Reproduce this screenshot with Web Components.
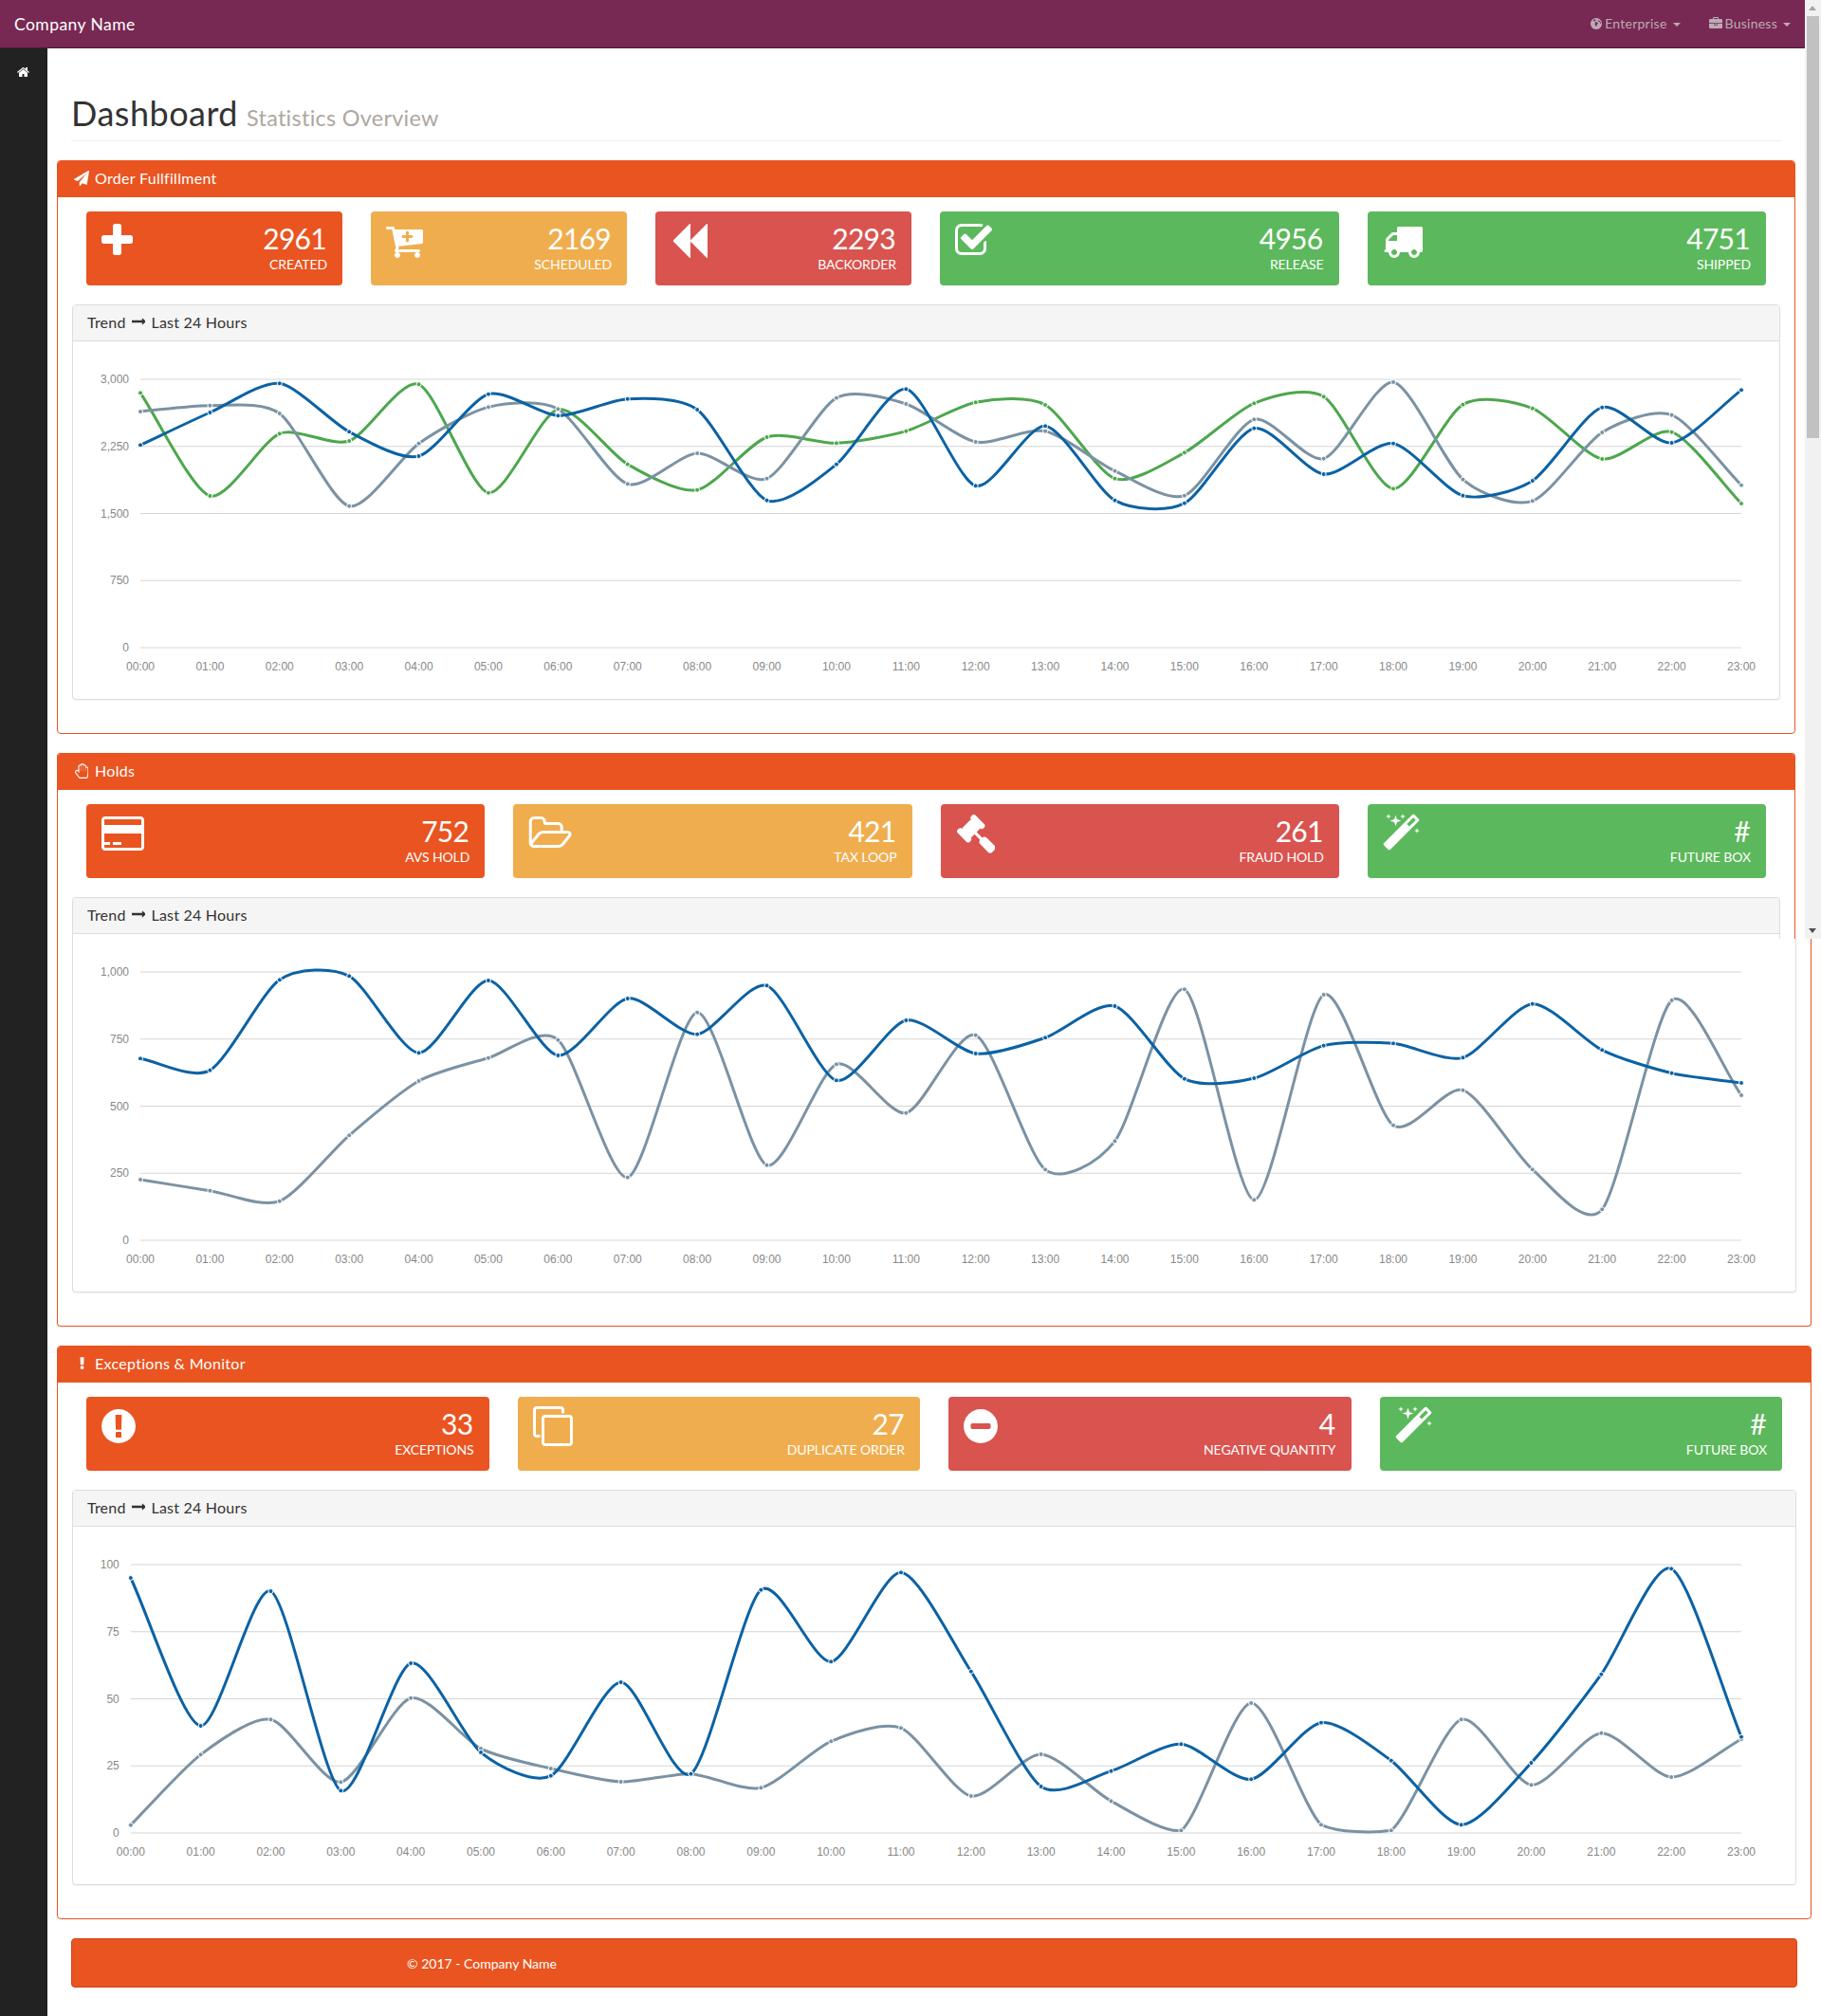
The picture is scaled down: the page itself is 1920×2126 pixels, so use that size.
<!DOCTYPE html>
<html lang="en"><head><meta charset="utf-8"><title>Dashboard</title>
<style>
html,body{margin:0;padding:0;background:#fff}
body{font-family:Lato,"Open Sans",sans-serif;color:#333;width:1920px;overflow:hidden}
</style></head><body>
<dash-app>
  <top-nav slot="nav" brand="Company Name"><nav-menu icon="globe">Enterprise</nav-menu><nav-menu icon="briefcase">Business</nav-menu></top-nav>
  <side-bar slot="side"></side-bar>
  <page-head>Dashboard<span slot="sub">Statistics Overview</span></page-head>

  <dash-panel icon="paper-plane" heading="Order Fullfillment">
    <stat-row cols="270px 270px 270px 1fr 1fr">
      <stat-box tone="primary" icon="plus" value="2961" label="CREATED"></stat-box>
      <stat-box tone="warning" icon="cart-plus" value="2169" label="SCHEDULED"></stat-box>
      <stat-box tone="danger" icon="backward" value="2293" label="BACKORDER"></stat-box>
      <stat-box tone="success" icon="check-square" value="4956" label="RELEASE"></stat-box>
      <stat-box tone="success" icon="truck" value="4751" label="SHIPPED"></stat-box>
    </stat-row>
    <trend-card><trend-chart chart="orders" origin="360" h="377"></trend-chart></trend-card>
  </dash-panel>

  <dash-panel icon="hand" heading="Holds" mode="top">
    <stat-row cols="1fr 1fr 1fr 1fr">
      <stat-box tone="primary" icon="credit-card" value="752" label="AVS HOLD"></stat-box>
      <stat-box tone="warning" icon="folder-open" value="421" label="TAX LOOP"></stat-box>
      <stat-box tone="danger" icon="gavel" value="261" label="FRAUD HOLD"></stat-box>
      <stat-box tone="success" icon="magic" value="#" label="FUTURE BOX"></stat-box>
    </stat-row>
    <trend-card mode="top"></trend-card>
  </dash-panel>
  <dash-panel mode="bottom">
    <trend-card mode="bottom"><trend-chart chart="holds" origin="990" h="372"></trend-chart></trend-card>
  </dash-panel>

  <dash-panel icon="exclamation" heading="Exceptions &amp; Monitor" wide>
    <stat-row cols="1fr 1fr 1fr 1fr">
      <stat-box tone="primary" icon="exclamation-circle" value="33" label="EXCEPTIONS"></stat-box>
      <stat-box tone="warning" icon="clone" value="27" label="DUPLICATE ORDER"></stat-box>
      <stat-box tone="danger" icon="minus-circle" value="4" label="NEGATIVE QUANTITY"></stat-box>
      <stat-box tone="success" icon="magic" value="#" label="FUTURE BOX"></stat-box>
    </stat-row>
    <trend-card><trend-chart chart="exceptions" origin="1610" h="377"></trend-chart></trend-card>
  </dash-panel>

  <page-foot>© 2017 - Company Name</page-foot>
  <fake-scrollbar slot="overlay"></fake-scrollbar>
</dash-app>

<script>
const ICONS={
 plus:[192,1408,"M1600 736v192q0 40-28 68t-68 28h-416v416q0 40-28 68t-68 28h-192q-40 0-68-28t-28-68v-416h-416q-40 0-68-28t-28-68v-192q0-40 28-68t68-28h416v-416q0-40 28-68t68-28h192q40 0 68 28t28 68v416h416q40 0 68 28t28 68z"],
 home:[64,1664,"M1472 992v480q0 26-19 45t-45 19h-384v-384h-256v384h-384q-26 0-45-19t-19-45v-480q0-1 .5-3t.5-3l575-474 575 474q1 2 1 6zm223-69l-62 74q-8 9-21 11h-3q-13 0-21-7l-692-577-692 577q-12 8-24 7-13-2-21-11l-62-74q-8-10-7-23.5t11-21.5l719-599q32-26 76-26t76 26l244 204v-195q0-14 9-23t23-9h192q14 0 23 9t9 23v408l219 182q10 8 11 21.5t-7 23.5z"],
 "paper-plane":[0,1792,"M1764 11q33 24 27 64l-256 1536q-5 29-32 45-14 8-31 8-11 0-24-5l-453-185-242 295q-18 23-49 23-13 0-22-4-19-7-30.5-23.5t-11.5-36.5v-349l864-1059-1069 925-395-162q-37-14-40-55-2-40 32-59l1664-960q15-9 32-9 20 0 36 11z"],
 exclamation:[608,576,"M1088 1248v224q0 26-19 45t-45 19h-256q-26 0-45-19t-19-45v-224q0-26 19-45t45-19h256q26 0 45 19t19 45zm30-1056l-28 768q-1 26-20.5 45t-45.5 19h-256q-26 0-45.5-19t-20.5-45l-28-768q-1-26 17.5-45t44.5-19h320q26 0 44.5 19t17.5 45z"],
 "exclamation-circle":[128,1536,"M896 128q209 0 385.5 103t279.5 279.5 103 385.5-103 385.5-279.5 279.5-385.5 103-385.5-103-279.5-279.5-103-385.5 103-385.5 279.5-279.5 385.5-103zm128 1247v-190q0-14-9-23.5t-22-9.5h-192q-13 0-23 10t-10 23v190q0 13 10 23t23 10h192q13 0 22-9.5t9-23.5zm-2-344l18-621q0-12-10-18-10-8-24-8h-220q-14 0-24 8-10 6-10 18l17 621q0 10 10 17.5t24 7.5h185q14 0 23.5-7.5t10.5-17.5z"],
 "minus-circle":[128,1536,"M1344 960v-128q0-26-19-45t-45-19h-768q-26 0-45 19t-19 45v128q0 26 19 45t45 19h768q26 0 45-19t19-45zm320-64q0 209-103 385.5t-279.5 279.5-385.5 103-385.5-103-279.5-279.5-103-385.5 103-385.5 279.5-279.5 385.5-103 385.5 103 279.5 279.5 103 385.5z"],
 "check-square":[64,1664,"M1472 930v318q0 119-84.5 203.5t-203.5 84.5h-832q-119 0-203.5-84.5t-84.5-203.5v-832q0-119 84.5-203.5t203.5-84.5h832q63 0 117 25 15 7 18 23 3 17-9 29l-49 49q-10 10-23 10-3 0-9-2-23-6-45-6h-832q-66 0-113 47t-47 113v832q0 66 47 113t113 47h832q66 0 113-47t47-113v-254q0-13 9-22l64-64q10-10 23-10 6 0 12 3 20 8 20 29zm231-489l-814 814q-24 24-57 24t-57-24l-430-430q-24-24-24-57t24-57l110-110q24-24 57-24t57 24l263 263 647-647q24-24 57-24t57 24l110 110q24 24 24 57t-24 57z"],
 truck:[0,1792,"M640 1408q0-52-38-90t-90-38-90 38-38 90 38 90 90 38 90-38 38-90zm-384-512h384v-256h-158q-13 0-22 9l-195 195q-9 9-9 22v30zm1280 512q0-52-38-90t-90-38-90 38-38 90 38 90 90 38 90-38 38-90zm256-1088v1024q0 15-4 26.5t-13.5 18.5-16.5 11.5-23.5 6-22.5 2-25.5 0-22.5-.5q0 106-75 181t-181 75-181-75-75-181h-384q0 106-75 181t-181 75-181-75-75-181h-64q-3 0-22.5.5t-25.5 0-22.5-2-23.5-6-16.5-11.5-13.5-18.5-4-26.5q0-26 19-45t45-19v-320q0-8-.5-35t0-38 2.5-34.5 6.5-37 14-30.5 22.5-30l198-198q19-19 50.5-32t58.5-13h160v-192q0-26 19-45t45-19h1024q26 0 45 19t19 45z"],
 "credit-card":[0,1920,"M1760 128q66 0 113 47t47 113v1216q0 66-47 113t-113 47h-1600q-66 0-113-47t-47-113v-1216q0-66 47-113t113-47h1600zm-1600 128q-13 0-22.5 9.5t-9.5 22.5v224h1664v-224q0-13-9.5-22.5t-22.5-9.5h-1600zm1600 1280q13 0 22.5-9.5t9.5-22.5v-608h-1664v608q0 13 9.5 22.5t22.5 9.5h1600zm-1632-128v-128h256v128h-256zm384 0v-128h384v128h-384z"],
 "folder-open":[32,1973,"M1845 931q0-35-53-35h-1088q-40 0-85.5 21.5t-71.5 52.5l-294 363q-18 24-18 40 0 35 53 35h1088q40 0 86-22t71-53l294-363q18-22 18-39zm-1141-163h768v-160q0-40-28-68t-68-28h-576q-40 0-68-28t-28-68v-64q0-40-28-68t-68-28h-320q-40 0-68 28t-28 68v853l256-315q44-53 116-87.5t140-34.5zm1269 163q0 62-46 120l-295 363q-43 53-116 87.5t-140 34.5h-1088q-92 0-158-66t-66-158v-960q0-92 66-158t158-66h320q92 0 158 66t66 158v32h544q92 0 158 66t66 158v160h192q54 0 99 24.5t67 70.5q15 32 15 68z"],
 gavel:[0,1771,"M1771 1536q0 53-37 90l-107 108q-39 37-91 37-53 0-90-37l-363-364q-38-36-38-90 0-53 43-96l-256-256-126 126q-14 14-34 14t-34-14q2 2 12.5 12t12.5 13 10 11.5 10 13.5 6 13.5 5.500 16.500 1.500 18q0 38-28 68-3 3-16.500 18t-19 20.500-18.500 16.500-22 15.500-22 9-26 4.500q-40 0-68-28l-408-408q-28-28-28-68 0-13 4.500-26t9-22 15.500-22 16.500-18.500 20.500-19 18-16.500q30-28 68-28 10 0 18 1.500t16.500 5.500 13.500 6 13.500 10 11.500 10 13 12.500 12 12.500q-14-14-14-34t14-34l348-348q14-14 34-14t34 14q-2-2-12.500-12t-12.500-13-10-11.500-10-13.500-6-13.500-5.500-16.500-1.500-18q0-38 28-68 3-3 16.500-18t19-20.500 18.500-16.500 22-15.500 22-9 26-4.500q40 0 68 28l408 408q28 28 28 68 0 13-4.500 26t-9 22-15.500 22-16.500 18.500-20.500 19-18 16.500q-30 28-68 28-10 0-18-1.500t-16.500-5.500-13.500-6-13.500-10-11.500-10-13-12.500-12-12.500q14 14 14 34t-14 34l-126 126 256 256q43-43 96-43 52 0 91 37l363 363q37 39 37 91z"],
 magic:[64,1664,"M1254 581l293-293-107-107-293 293zm447-293q0 27-18 45l-1286 1286q-18 18-45 18t-45-18l-198-198q-18-18-18-45t18-45l1286-1286q18-18 45-18t45 18l198 198q18 18 18 45zm-1351-190l98 30-98 30-30 98-30-98-98-30 98-30 30-98zm350 162l196 60-196 60-60 196-60-196-196-60 196-60 60-196zm930 478l98 30-98 30-30 98-30-98-98-30 98-30 30-98zm-640-640l98 30-98 30-30 98-30-98-98-30 98-30 30-98z"],
 clone:[0,1792,"M1664 1632v-1088q0-13-9.500-22.500t-22.500-9.500h-1088q-13 0-22.500 9.500t-9.500 22.500v1088q0 13 9.500 22.500t22.500 9.500h1088q13 0 22.500-9.500t9.500-22.500zm128-1088v1088q0 66-47 113t-113 47h-1088q-66 0-113-47t-47-113v-1088q0-66 47-113t113-47h1088q66 0 113 47t47 113zm-384-384v160h-128v-160q0-13-9.500-22.500t-22.500-9.500h-1088q-13 0-22.500 9.500t-9.500 22.500v1088q0 13 9.500 22.500t22.500 9.500h160v128h-160q-66 0-113-47t-47-113v-1088q0-66 47-113t113-47h1088q66 0 113 47t47 113z"],
 hand:[0,1536,"M880 128q-46 0-79 33t-33 79v656h-32v-528q0-46-33-79t-79-33-79 33-33 79v528 256l-154-205q-38-51-102-51-53 0-90.500 37.500t-37.500 90.500q0 43 26 77l384 512q38 51 102 51h688q34 0 61-22t34-56l76-405q5-32 5-59v-498q0-46-33-79t-79-33-79 33-33 79v272h-32v-528q0-46-33-79t-79-33-79 33-33 79v528h-32v-656q0-46-33-79t-79-33zm0-128q68 0 125.500 35.500t88.500 96.500q19-4 42-4 99 0 169.500 70.500t70.500 169.500v17q105-6 180.500 64t75.500 175v498q0 40-8 83l-76 404q-14 79-76.500 131t-143.500 52h-688q-60 0-114.500-27.500t-90.500-74.500l-384-512q-51-68-51-154 0-106 75-181t181-75q78 0 128 34v-434q0-99 70.500-169.500t169.500-70.500q23 0 42 4 31-61 88.500-96.500t125.500-35.500z"],
 "cart-plus":[0,1664,"M1216 704q0-26-19-45t-45-19h-128v-128q0-26-19-45t-45-19-45 19-19 45v128h-128q-26 0-45 19t-19 45 19 45 45 19h128v128q0 26 19 45t45 19 45-19 19-45v-128h128q26 0 45-19t19-45zm-576 832q0 53-37.500 90.500t-90.500 37.500-90.500-37.500-37.500-90.500 37.500-90.500 90.500-37.500 90.500 37.500 37.500 90.500zm896 0q0 53-37.500 90.500t-90.500 37.500-90.500-37.500-37.500-90.500 37.500-90.500 90.500-37.500 90.500 37.500 37.500 90.500zm128-1088v512q0 24-16 42.500t-41 21.500l-1044 122q1 7 4.500 21.500t6 26.500 2.500 22q0 16-24 64h920q26 0 45 19t19 45-19 45-45 19h-1024q-26 0-45-19t-19-45q0-14 11-39.500t29.500-59.500 20.500-38l-177-823h-204q-26 0-45-19t-19-45 19-45 45-19h256q16 0 28.500 6.500t20 15.500 13 24.500 7.500 26.500 5.500 29.500 4.500 25.500h1201q26 0 45 19t19 45z"],
 backward:[64,1664,"M1683 141q19-19 32-13t13 32v1472q0 26-13 32t-32-13l-710-710q-9-9-13-19v710q0 26-13 32t-32-13l-710-710q-19-19-19-45t19-45l710-710q19-19 32-13t13 32v710q4-10 13-19z"],
 arrow:[64,1664,"M1728 893q0 14-10 24l-384 354q-16 14-35 6-19-9-19-29v-224h-1248q-14 0-23-9t-9-23v-192q0-14 9-23t23-9h1248v-224q0-21 19-29t35 5l384 350q10 10 10 23z"],
 briefcase:[0,1792,"M640 256h512v-128h-512v128zm1152 640v480q0 66-47 113t-113 47h-1472q-66 0-113-47t-47-113v-480h672v160q0 26 19 45t45 19h320q26 0 45-19t19-45v-160h672zm-768 0v128h-256v-128h256zm768-480v384h-1792v-384q0-66 47-113t113-47h352v-160q0-40 28-68t68-28h576q40 0 68 28t28 68v160h352q66 0 113 47t47 113z"],
 globe:[128,1536,"M896 128q209 0 385.500 103t279.500 279.500 103 385.500-103 385.500-279.500 279.500-385.500 103-385.500-103-279.500-279.500-103-385.500 103-385.500 279.500-279.500 385.500-103zm-420 330l90 130 170 60 60 130-90 110 50 170 130 230 70-40 20-190 150-150-20-150-170-60-150-100-110 30-20-130 120-30 90-90-150-90zm700-50l-120 90 90 60 150 70 130 130-10 70 90 100 40-60-60-200-160-170z"]
};
function iconSvg(name,size,extra){
  const [x0,w,d]=ICONS[name];
  return `<svg xmlns="http://www.w3.org/2000/svg" width="${w/1792*size}" height="${size}" viewBox="${x0} 0 ${w} 1792" fill="currentColor" style="display:block;flex:none;${extra||''}"><path fill-rule="evenodd" d="${d}"/></svg>`;
}
function def(name,html,init){
  customElements.define(name,class extends HTMLElement{
    connectedCallback(){
      if(this.shadowRoot)return;
      const r=this.attachShadow({mode:'open'});
      r.innerHTML=typeof html==='function'?html(this):html;
      if(init)init(this,r);
    }
  });
}
def('dash-app',`<style>
:host{display:block;position:relative;width:1920px;height:2126px;overflow:hidden;background:#fff}
.row{display:flex;height:2075px}
main{flex:1;min-width:0;padding-left:10px}
</style><slot name="nav"></slot><div class="row"><slot name="side"></slot><main><slot></slot></main></div><slot name="overlay"></slot>`);

def('top-nav',h=>`<style>
:host{display:flex;align-items:center;justify-content:space-between;box-sizing:border-box;height:51px;margin-right:17px;background:#772953;border-bottom:1px solid #4d1a36;padding:0 15px}
.brand{color:#fff;font-size:17.5px;letter-spacing:.45px;line-height:20px;margin-top:1px}
.menu{display:flex;gap:0;color:#c3b3bc}
</style><div class="brand">${h.getAttribute('brand')}</div><div class="menu"><slot></slot></div>`);

def('nav-menu',h=>`<style>
:host{display:flex;align-items:center;font-size:14px;color:#bcaab4;line-height:20px;letter-spacing:.25px}
.c{width:0;height:0;border-top:4px solid;border-left:4px solid transparent;border-right:4px solid transparent;margin-left:6px;margin-top:2px}
:host(:first-child){margin-right:30px}
</style>${iconSvg(h.getAttribute('icon'),14,'margin-right:3px')}<slot></slot><span class="c"></span>`);

def('side-bar',`<style>
:host{display:block;flex:none;width:50px;background:#222;color:#fff;box-sizing:border-box;padding:18px 0 0 18px}
</style>`+iconSvg('home',14));

def('page-head',`<style>
:host{display:block;margin:0 42px 20px 15px;box-sizing:border-box;height:98px;border-bottom:1px solid #eee;position:relative}
h1{margin:0;font-weight:400;font-size:36px;line-height:40px;color:#333;padding:48px 0 0 0;letter-spacing:.5px;white-space:nowrap;display:flex;align-items:baseline;gap:9px}
small{font-size:23.4px;color:#aea79f;font-weight:400;line-height:1;letter-spacing:.3px}
</style><h1><span><slot></slot></span><small><slot name="sub"></slot></small></h1>`);

def('dash-panel',h=>{
  const m=h.getAttribute('mode'),wide=h.hasAttribute('wide');
  const head=h.getAttribute('heading');
  return `<style>
:host{display:block;box-sizing:border-box;margin:0 ${(wide||m==='bottom')?10:27}px ${m==='top'?0:20}px 0;border:1px solid #e95420;border-radius:${m==='top'?'4px 4px 0 0':m==='bottom'?'0 0 4px 4px':'4px'};${m==='top'?'border-bottom:0;height:196px;':m==='bottom'?'border-top:0;height:409px;':'height:605px;'}background:#fff}
header{display:flex;align-items:center;box-sizing:border-box;height:38px;background:#e95420;color:#fff;font-size:16px;padding:0 15px 3px;border-radius:3px 3px 0 0;letter-spacing:.3px}
.fw{width:20.5px;height:16px;display:flex;justify-content:center;margin-right:3.5px;flex:none}
.body{padding:${m==='bottom'?'0 15px':'15px 15px 0'};display:flex;flex-direction:column;gap:20px}
</style>${head?`<header><span class="fw">${iconSvg(h.getAttribute('icon'),16)}</span><span>${head.replace('&','&amp;')}</span></header>`:''}<div class="body"><slot></slot></div>`;
});

def('stat-row',h=>`<style>:host{display:grid;gap:30px;padding:0 15px;grid-template-columns:${h.getAttribute('cols')}}</style><slot></slot>`);

def('stat-box',h=>{
  const c={primary:'#e95420',warning:'#f0ad4e',danger:'#d9534f',success:'#5cb85c'}[h.getAttribute('tone')];
  return `<style>
:host{display:flex;justify-content:space-between;box-sizing:border-box;height:78px;background:${c};border-radius:4px;color:#fff;padding:10px 16px 0;min-width:0}
.r{text-align:right}
.v{font-size:30px;line-height:36px;margin-top:-.5px;letter-spacing:-.7px;padding-right:1px}
.l{font-size:14px;line-height:20px;margin-top:0;letter-spacing:-.1px}
</style>${iconSvg(h.getAttribute('icon'),42)}<div class="r"><div class="v">${h.getAttribute('value')}</div><div class="l">${h.getAttribute('label')}</div></div>`;
});

def('trend-card',h=>{
  const m=h.getAttribute('mode');
  return `<style>
:host{display:block;box-sizing:border-box;background:#fff;border:1px solid #ddd;${m==='top'?'border-bottom:0;border-radius:4px 4px 0 0;height:44px;':m==='bottom'?'border-top:0;border-radius:0 0 4px 4px;height:373px;box-shadow:0 1px 1px rgba(0,0,0,.05);':'height:417px;border-radius:4px;box-shadow:0 1px 1px rgba(0,0,0,.05);'}}
.h{display:flex;align-items:center;box-sizing:border-box;height:38px;background:#f5f5f5;border-bottom:1px solid #ddd;padding:0 15px 3px;font-size:16px;letter-spacing:.22px;color:#333;border-radius:3px 3px 0 0;gap:6px}
</style>${m==='bottom'?'':`<div class="h"><span>Trend</span>${iconSvg('arrow',16)}<span>Last 24 Hours</span></div>`}<slot></slot>`;
});

const CHARTS={
 orders:{xs:[148,1836],grid:[400,683],ticks:['3,000','2,250','1,500','750','0'],zy:370,series:[
  ['#4da74d',[133,459,262,285,106,449,185,359,440,273,292,254,163,171,404,322,166,145,436,170,182,342,257,483]],
  ['#7A92A3',[192,173,198,491,293,178,184,421,324,404,149,168,288,254,380,458,217,341,99,407,475,258,203,425]],
  ['#0b62a4',[298,195,103,256,333,137,205,152,186,473,359,121,427,238,473,482,245,390,293,458,411,179,291,124]]]},
 holds:{xs:[148,1836],grid:[1025,1308],ticks:['1,000','750','500','250','0'],zy:1000,series:[
  ['#7A92A3',[732,767,800,592,420,347,290,725,203,686,367,521,275,700,610,130,796,147,560,449,700,826,165,465]],
  ['#0b62a4',[349,386,100,88,331,102,339,159,272,118,418,228,333,283,183,413,411,308,301,346,176,322,395,426]]]},
 exceptions:{xs:[137.8,1836],grid:[1650,1933],ticks:['100','75','50','25','0'],zy:1630,series:[
  ['#7A92A3',[884,661,550,748,482,642,705,747,722,766,619,577,792,660,808,901,498,883,901,550,757,593,732,612]],
  ['#0b62a4',[102,570,144,775,372,654,728,432,722,140,367,85,398,762,713,628,739,560,680,883,687,407,73,605]]]}
};
function chartPath(c,bottom){
  const n=c.length,g=c.map((p,i)=>i===0?(c[1].y-p.y)/(c[1].x-p.x):i===n-1?(p.y-c[i-1].y)/(p.x-c[i-1].x):(c[i+1].y-c[i-1].y)/(c[i+1].x-c[i-1].x));
  let d=`M${c[0].x},${c[0].y}`;
  for(let i=1;i<n;i++){
    const ix=(c[i].x-c[i-1].x)/4;
    d+=`C${c[i-1].x+ix},${Math.min(bottom,c[i-1].y+ix*g[i-1])},${c[i].x-ix},${Math.min(bottom,c[i].y-ix*g[i])},${c[i].x},${c[i].y}`;
  }
  return d;
}
def('trend-chart',h=>{
  const cfg=CHARTS[h.getAttribute('chart')],oy=+h.getAttribute('origin'),H=+h.getAttribute('h'),ox=77;
  const [x0,x1]=cfg.xs,[yt,yb]=cfg.grid,dx=(x1-x0)/23,step=(yb-yt)/4;
  let s='';
  cfg.ticks.forEach((t,i)=>{
    const y=yt+step*i-oy;
    s+=`<text x="${x0-12-ox}" y="${y+4}" text-anchor="end" class="t">${t}</text><path d="M${x0-ox},${y}H${x1-ox}" stroke="#aaa" stroke-width=".5" fill="none"/>`;
  });
  for(let i=0;i<24;i++){
    s+=`<text x="${x0+dx*i-ox}" y="${yb-oy+24}" text-anchor="middle" class="t">${String(i).padStart(2,'0')}:00</text>`;
  }
  cfg.series.forEach(([col,zs])=>{
    const pts=zs.map((z,i)=>({x:x0+dx*i-ox,y:cfg.zy+z/3-oy}));
    s+=`<path d="${chartPath(pts,yb-oy)}" fill="none" stroke="${col}" stroke-width="3"/>`;
  });
  cfg.series.forEach(([col,zs])=>{
    zs.forEach((z,i)=>{s+=`<circle cx="${x0+dx*i-ox}" cy="${cfg.zy+z/3-oy}" r="2.5" fill="${col}" stroke="#fff" stroke-width="1"/>`;});
  });
  return `<style>:host{display:block;height:${H}px}svg{display:block}.t{font:12px "Liberation Sans",Arial,sans-serif;fill:#888}</style><svg xmlns="http://www.w3.org/2000/svg" width="1816" height="${H}">${s}</svg>`;
});

def('page-foot',`<style>
:host{display:flex;align-items:center;box-sizing:border-box;height:52px;margin:0 0 0 15px;background:#e95420;border:1px solid #d34615;border-radius:4px;color:#fff;font-size:14px;padding-left:353px;width:1820px;font-weight:400}
</style><slot></slot>`);

def('fake-scrollbar',`<style>
:host{display:block;position:absolute;top:0;right:0;width:17px;height:990px;background:#f1f1f1}
.thumb{position:absolute;left:2px;right:2px;top:17px;height:445px;background:#c1c1c1}
.up,.dn{position:absolute;left:4px;width:0;height:0;border-left:4px solid transparent;border-right:4px solid transparent}
.up{top:6px;border-bottom:5px solid #a3a3a3}
.dn{bottom:6px;border-top:5px solid #505050}
</style><div class="up"></div><div class="thumb"></div><div class="dn"></div>`);
</script>
</body></html>
